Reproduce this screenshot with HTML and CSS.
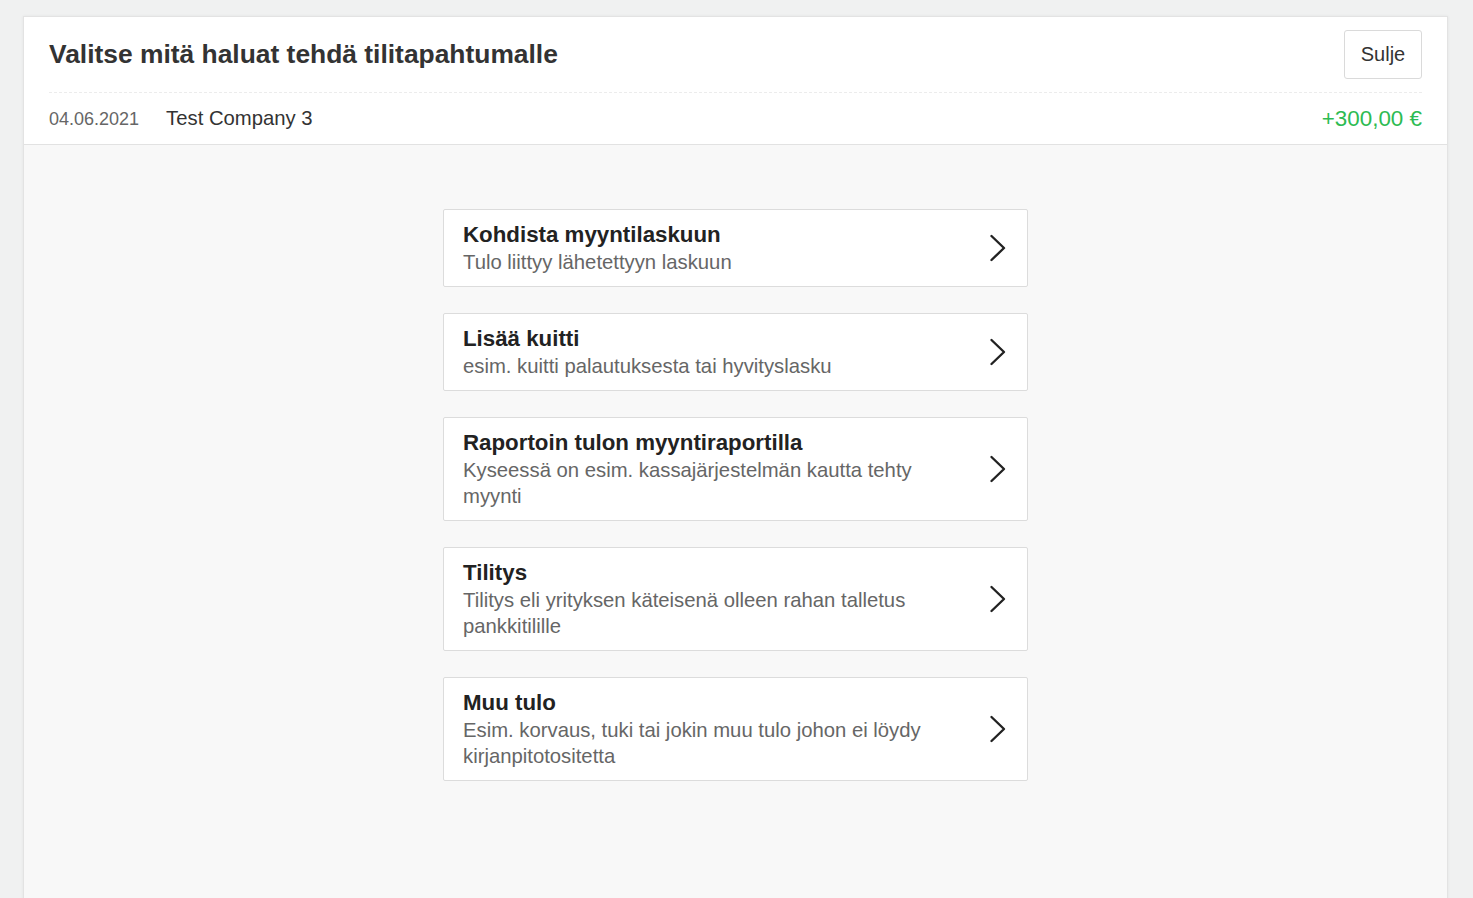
FILE: index.html
```html
<!DOCTYPE html>
<html lang="fi">
<head>
<meta charset="utf-8">
<title>Valitse toiminto</title>
<link rel="stylesheet" href="styles.css">
</head>
<body>
<div class="panel">
  <div class="header">
    <div class="title-row">
      <h1 class="title">Valitse mitä haluat tehdä tilitapahtumalle</h1>
      <button class="close-btn">Sulje</button>
    </div>
    <div class="tx-row">
      <span class="tx-date">04.06.2021</span>
      <span class="tx-name">Test Company 3</span>
      <span class="tx-amount">+300,00 €</span>
    </div>
  </div>
  <div class="body">
    <div class="options">
      <a class="option">
        <div class="option-text">
          <div class="option-title">Kohdista myyntilaskuun</div>
          <div class="option-sub">Tulo liittyy lähetettyyn laskuun</div>
        </div>
        <svg class="chev" viewBox="0 0 18 28"><path d="M2.5 2 L15 14 L2.5 26" fill="none" stroke="#222" stroke-width="2.4" stroke-linecap="round" stroke-linejoin="round"/></svg>
      </a>
      <a class="option">
        <div class="option-text">
          <div class="option-title">Lisää kuitti</div>
          <div class="option-sub">esim. kuitti palautuksesta tai hyvityslasku</div>
        </div>
        <svg class="chev" viewBox="0 0 18 28"><path d="M2.5 2 L15 14 L2.5 26" fill="none" stroke="#222" stroke-width="2.4" stroke-linecap="round" stroke-linejoin="round"/></svg>
      </a>
      <a class="option">
        <div class="option-text">
          <div class="option-title">Raportoin tulon myyntiraportilla</div>
          <div class="option-sub">Kyseessä on esim. kassajärjestelmän kautta tehty myynti</div>
        </div>
        <svg class="chev" viewBox="0 0 18 28"><path d="M2.5 2 L15 14 L2.5 26" fill="none" stroke="#222" stroke-width="2.4" stroke-linecap="round" stroke-linejoin="round"/></svg>
      </a>
      <a class="option">
        <div class="option-text">
          <div class="option-title">Tilitys</div>
          <div class="option-sub">Tilitys eli yrityksen käteisenä olleen rahan talletus pankkitilille</div>
        </div>
        <svg class="chev" viewBox="0 0 18 28"><path d="M2.5 2 L15 14 L2.5 26" fill="none" stroke="#222" stroke-width="2.4" stroke-linecap="round" stroke-linejoin="round"/></svg>
      </a>
      <a class="option">
        <div class="option-text">
          <div class="option-title">Muu tulo</div>
          <div class="option-sub">Esim. korvaus, tuki tai jokin muu tulo johon ei löydy kirjanpitotositetta</div>
        </div>
        <svg class="chev" viewBox="0 0 18 28"><path d="M2.5 2 L15 14 L2.5 26" fill="none" stroke="#222" stroke-width="2.4" stroke-linecap="round" stroke-linejoin="round"/></svg>
      </a>
    </div>
  </div>
</div>
</body>
</html>
```

FILE: styles.css
```css
html, body {
  margin: 0;
  padding: 0;
}
body {
  background: #f0f1f1;
  font-family: "Liberation Sans", Arial, Helvetica, sans-serif;
  color: #333;
  padding: 16px 25px 0 23px;
  height: 898px;
  box-sizing: border-box;
  overflow: hidden;
}
.panel {
  border: 1px solid #e3e3e3;
  border-bottom: none;
  background: #f8f8f8;
  height: 900px;
  box-shadow: 0 0 3px rgba(0,0,0,0.06);
}
.header {
  background: #fff;
  border-bottom: 1px solid #e2e2e2;
  padding: 0 25px;
}
.title-row {
  display: flex;
  align-items: center;
  justify-content: space-between;
  height: 75px;
  border-bottom: 1px dashed #ececec;
}
.title {
  margin: 0;
  font-size: 26.4px;
  font-weight: bold;
  color: #333;
  margin-top: -1px;
}
.close-btn {
  font-family: inherit;
  font-size: 20px;
  color: #333;
  background: #fff;
  border: 1px solid #dadada;
  border-radius: 3px;
  width: 78px;
  height: 49px;
  padding: 0;
  margin-top: -1px;
}
.tx-row {
  display: flex;
  align-items: center;
  height: 51px;
}
.tx-date {
  font-size: 18px;
  color: #666;
  margin-right: 27px;
  margin-top: 1px;
}
.tx-name {
  font-size: 20.3px;
  color: #333;
  margin-top: -1px;
}
.tx-amount {
  margin-left: auto;
  font-size: 22.4px;
  color: #2dbb52;
  margin-top: 1px;
}
.body {
  padding-top: 64px;
}
.options {
  width: 585px;
  margin-left: 419px;
  display: flex;
  flex-direction: column;
  gap: 26px;
}
.option {
  display: flex;
  align-items: center;
  background: #fff;
  border: 1px solid #dcdcdc;
  border-radius: 2px;
  padding: 11px 20px 11px 19px;
  cursor: pointer;
}
.option-text {
  flex: 1;
  max-width: 490px;
  margin-right: auto;
}
.option-title {
  font-size: 22.3px;
  font-weight: bold;
  color: #222;
  line-height: 28px;
}
.option-sub {
  font-size: 20.3px;
  color: #666;
  line-height: 26px;
}
.chev {
  width: 18px;
  height: 28px;
  flex: none;
}
```
